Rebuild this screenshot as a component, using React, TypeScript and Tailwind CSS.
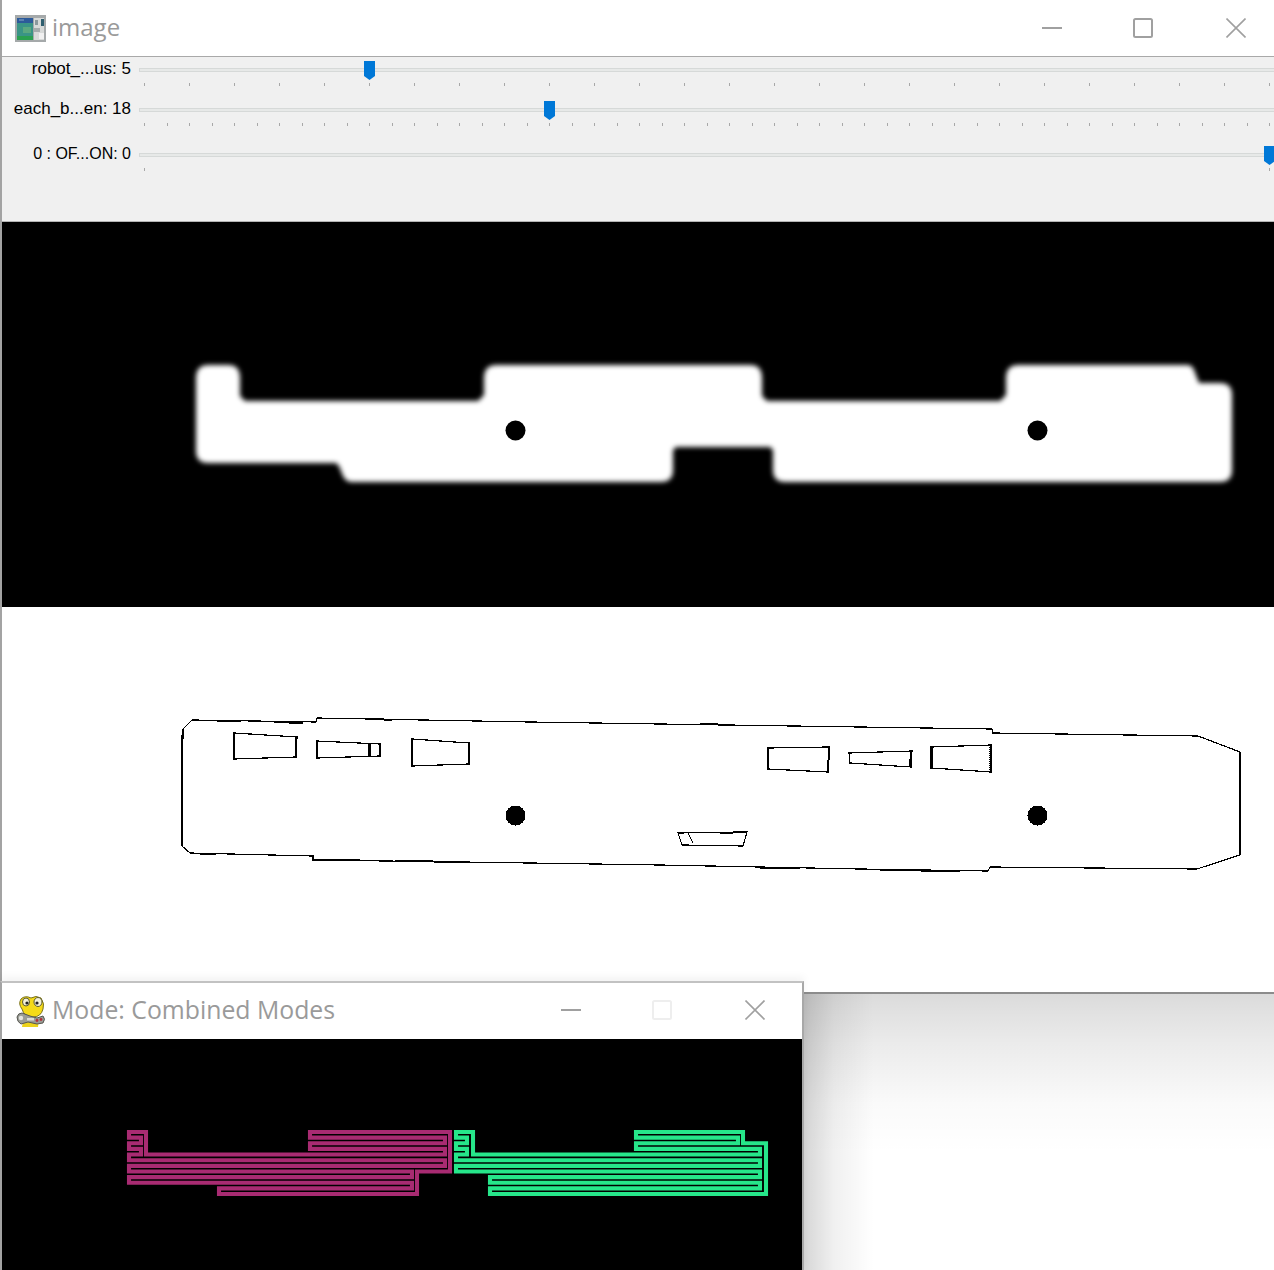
import React from "react";

const maskPath =
  "M196 378 Q196 365 209 365 L228 365 Q240 365 240 378 L240 396 L245 401 L478 401 L484 395 L484 378 Q484 365 497 365 L750 365 Q762 365 762 378 L762 396 L767 401 L1000 401 L1006 395 L1006 378 Q1006 365 1019 365 L1187 365 Q1192 365 1194 370 L1199 383 L1220 383 Q1232 383 1232 395 L1232 470 Q1232 482 1220 482 L785 482 Q773 482 773 470 L773 450 L770 447 L676 447 L673 450 L673 470 Q673 482 661 482 L352 482 Q346 482 343 476 L339 466 L336 463 L208 463 Q196 463 196 451 Z";

const hullPath =
  "M183 729 L192 720 L316 722 L317 718 L530 722 L660 724 L860 727 L992 729 L993 733 L1198 736 L1240 752 L1240 855 L1197 869 L990 867 L988 871 L860 869 L660 865 L530 863 L313 860 L313 856 L190 853 L182 846 Z";

const holes = [
  "M234 733 L297 737 L296 757 L234 759 Z",
  "M317 741 L380 744 L380 756 L317 758 Z",
  "M370 744 L370 756",
  "M412 739 L469 743 L469 764 L412 766 Z",
  "M768 748 L829 747 L828 772 L768 769 Z",
  "M849 753 L912 751 L911 767 L850 763 Z",
  "M931 747 L991 745 L991 772 L931 768 Z",
  "M678 833 L747 832 L743 846 L682 845 Z",
  "M688 833 L693 843",
];

// heavier runs where the contour in the picture is thicker
const heavyRuns = [
  "M217 721 L241 721",
  "M274 722 L303 723",
  "M375 719 L392 720",
  "M182 735 L182 845",
  "M200 854 L216 854",
  "M313 860 L360 860",
  "M395 861 L470 862",
  "M234 734 L234 759",
  "M296 738 L296 757",
  "M369 744 L369 757",
  "M768 750 L768 769",
  "M829 748 L828 772",
  "M911 752 L910 767",
  "M932 748 L932 768",
  "M700 724 L735 725",
  "M760 868 L800 868",
  "M880 870 L960 871",
  "M720 833 L747 832",
];

// lawn-mower rows share one pitch, so paths are [x, row index] pairs
const rowY = (row: number) => 1132 + row * 5.64;
const toPath = (pts: number[][]) =>
  "M" + pts.map(([x, r]) => `${x} ${rowY(r).toFixed(2)}`).join(" L") + " Z";

const magentaPath = toPath([
  [129, 0], [146, 0], [146, 4], [445, 4], [445, 3], [310, 3], [310, 2], [445, 2], [445, 1], [310, 1], [310, 0],
  [450, 0], [450, 7], [417, 7], [417, 11], [219, 11], [219, 10], [412, 10], [412, 9], [129, 9], [129, 8],
  [412, 8], [412, 7], [129, 7], [129, 6], [445, 6], [445, 5], [129, 5], [129, 4], [141, 4], [141, 3], [129, 3],
  [129, 2], [141, 2], [141, 1], [129, 1],
]);

const greenPath = toPath([
  [456, 0], [473, 0], [473, 4], [760, 4], [760, 3], [636, 3], [636, 2], [738, 2], [738, 1], [636, 1], [636, 0],
  [743, 0], [743, 2], [766, 2], [766, 11], [490, 11], [490, 10], [760, 10], [760, 9], [490, 9], [490, 8],
  [760, 8], [760, 7], [456, 7], [456, 6], [760, 6], [760, 5], [456, 5], [456, 4], [467, 4], [467, 3], [456, 3],
  [456, 2], [467, 2], [467, 1], [456, 1],
]);

function Bolt({ cx, cy }: { cx: number; cy: number }) {
  return <circle cx={cx} cy={cy} r="10" fill="#000" />;
}

function ImageIcon() {
  return (
    <svg width="31" height="27" viewBox="0 0 31 27" shapeRendering="crispEdges" className="blur-[0.4px]">
      <rect width="31" height="27" fill="#a5a9aa" />
      <rect x="2" y="3" width="16" height="22" fill="#3a9486" />
      <rect x="2" y="3" width="16" height="5" fill="#2c5a9a" />
      <rect x="4" y="4" width="5" height="2" fill="#5a80b0" />
      <rect x="2" y="21" width="16" height="4" fill="#2aa050" />
      <rect x="8" y="12" width="8" height="6" fill="#5aa880" />
      <rect x="19" y="3" width="10" height="22" fill="#d8dad9" />
      <rect x="20" y="5" width="3" height="5" fill="#8a989c" />
      <rect x="26" y="4" width="3" height="7" fill="#2f5f70" />
      <rect x="19" y="13" width="6" height="4" fill="#a5abac" />
      <rect x="24" y="18" width="5" height="6" fill="#f1f1f1" />
    </svg>
  );
}

function SnakeIcon() {
  return (
    <svg width="30" height="33" viewBox="0 0 30 33" className="blur-[0.3px]">
      <path d="M7 26 L6 32 L22 32 L23 24 Z" fill="#ecd21a" />
      <path d="M5 4 Q9 0 15 3 Q20 0 25 3 Q29 9 27 14 Q25 22 17 22 Q8 22 6 14 Q2 9 5 4 Z" fill="#f5da18" stroke="#77701f" strokeWidth="1" />
      <ellipse cx="10" cy="7" rx="3.5" ry="4" fill="#f4f1d8" stroke="#5a5a30" strokeWidth="1" />
      <ellipse cx="22" cy="7" rx="4" ry="4.5" fill="#f4f1d8" stroke="#5a5a30" strokeWidth="1" />
      <circle cx="11" cy="8" r="1.6" fill="#222" />
      <circle cx="21" cy="8" r="1.6" fill="#222" />
      <path d="M1 22 Q2 18 6 18 L14 21 L21 23 L27 21 Q30 24 27 28 L21 29 L12 27 L5 29 Q1 27 1 22 Z" fill="#9a9c96" stroke="#55564f" strokeWidth="1" />
      <circle cx="5" cy="23" r="2.2" fill="#e4e4df" />
      <rect x="11" y="23" width="7" height="2.5" fill="#dcdcd5" />
      <circle cx="21" cy="25.5" r="1.4" fill="#b03038" />
      <circle cx="25" cy="24.5" r="1.4" fill="#b03038" />
    </svg>
  );
}

function Caption({ min, max, close }: { min: string; max: string; close: string }) {
  return (
    <>
      <svg width="20" height="2" viewBox="0 0 20 2" className={min}>
        <rect width="20" height="2" fill="#a0a0a0" />
      </svg>
      <svg width="20" height="20" viewBox="0 0 20 20" className={max}>
        <rect x="1" y="1" width="18" height="18" rx="1.5" fill="none" stroke="currentColor" strokeWidth="2" />
      </svg>
      <svg width="20" height="20" viewBox="0 0 20 20" className={close}>
        <path d="M0.5 0.5 L19.5 19.5 M19.5 0.5 L0.5 19.5" stroke="#a0a0a0" strokeWidth="1.6" />
      </svg>
    </>
  );
}

function Slider({
  label,
  labelSize,
  value,
  max,
  ticks,
  rowClass,
}: {
  label: string;
  labelSize: string;
  value: number;
  max: number;
  ticks: number;
  rowClass: string;
}) {
  return (
    <div className={rowClass}>
      <div className="flex items-start">
        <span className={`w-[129px] shrink-0 text-right leading-[24px] text-black whitespace-pre ${labelSize}`}>{label}</span>
        <div className="flex-1 ml-2 relative mt-[11px]">
          <div className="h-1 bg-[#e7e9e8] border border-[#d6d9d8] border-r-0" />
          <svg
            width="11"
            height="19"
            viewBox="0 0 11 19"
            className="absolute top-[-7px]"
            style={{ left: (value / max) * 1125 }}
          >
            <path d="M0 0 H11 V15 L5.5 19 L0 15 Z" fill="#0078d7" />
          </svg>
          <div className="flex justify-between ml-[5px] mr-[4px] mt-[11px]">
            {Array.from({ length: ticks }, (_, i) => (
              <div key={i} className="w-px h-[3px] bg-[#a8a8a8]" />
            ))}
          </div>
        </div>
      </div>
    </div>
  );
}

export default function App() {
  return (
    <div className="relative w-[1274px] h-[1270px] overflow-hidden bg-white font-['Liberation_Sans',Arial,sans-serif]">
      <div className="flex flex-col border-l-2 border-[#a3a3a3]">
        <header className="h-[56px] flex items-center bg-white relative">
          <div className="ml-[13px] mr-[6px]">
            <ImageIcon />
          </div>
          <span className="font-['Open_Sans',sans-serif] text-[24px] text-[#9a9a9a] leading-none pb-[2px]">image</span>
          <div className="ml-auto flex items-center">
            <Caption min="mr-[71px]" max="mr-[73px] text-[#a0a0a0]" close="mr-[28px]" />
          </div>
        </header>
        <div className="h-px bg-[#a9a9a9]" />
        <div className="h-[165px] bg-[#f0f0f0] border-b border-[#b4b4b4] flex flex-col">
          <Slider label="robot_...us: 5" labelSize="text-[17px]" value={5} max={25} ticks={26} rowClass="h-10" />
          <Slider label="each_b...en: 18" labelSize="text-[17px]" value={18} max={50} ticks={51} rowClass="h-[45px]" />
          <Slider label="0 : OF...ON: 0" labelSize="text-[16px]" value={1} max={1} ticks={2} rowClass="flex-1" />
        </div>
        <svg width="1272" height="385" viewBox="2 222 1272 385" className="block bg-black">
          <defs>
            <filter id="soft" x="-5%" y="-10%" width="110%" height="120%">
              <feGaussianBlur stdDeviation="2.6" />
            </filter>
          </defs>
          <path d={maskPath} fill="#fff" filter="url(#soft)" />
          <Bolt cx={515.5} cy={430.5} />
          <Bolt cx={1037.5} cy={430.5} />
        </svg>
        <svg width="1272" height="385" viewBox="2 607 1272 385" className="block bg-white" shapeRendering="crispEdges">
          <path d={hullPath} fill="none" stroke="#000" strokeWidth="1.2" />
          {holes.map((d) => (
            <path key={d} d={d} fill="none" stroke="#000" strokeWidth="1.2" />
          ))}
          {heavyRuns.map((d) => (
            <path key={d} d={d} fill="none" stroke="#000" strokeWidth="2" />
          ))}
          <path d="M989.5 747 L989.5 771" stroke="#000" strokeWidth="2" strokeDasharray="1 1" />
          <Bolt cx={515.5} cy={815.5} />
          <Bolt cx={1037.5} cy={815.5} />
        </svg>
        <div className="h-[2px] bg-[#8c8c8c]" />
      </div>

      {/* shadow the second window drops on the desktop */}
      <div className="absolute left-[804px] top-[994px] w-[470px] h-[276px] bg-[linear-gradient(180deg,rgba(0,0,0,0.14)_0px,rgba(0,0,0,0.08)_50px,rgba(0,0,0,0.02)_110px,rgba(0,0,0,0)_160px)]" />
      <div className="absolute left-[804px] top-[994px] w-[80px] h-[276px] bg-[linear-gradient(90deg,rgba(0,0,0,0.16)_0px,rgba(0,0,0,0.06)_30px,rgba(0,0,0,0)_70px)]" />

      <div className="absolute left-0 top-[981px] w-[804px] h-[289px] flex flex-col border-t-2 border-r-2 border-l-2 border-t-[#c2c2c2] border-r-[#a8a8a8] border-l-[#a3a3a3] shadow-[0_-4px_8px_rgba(0,0,0,0.05)]">
        <header className="h-[56px] flex items-center bg-white">
          <div className="ml-[14px] mr-[6px]">
            <SnakeIcon />
          </div>
          <span className="font-['Open_Sans',sans-serif] text-[24.8px] text-[#9a9a9a] leading-none pb-[3px]">Mode: Combined Modes</span>
          <div className="ml-auto flex items-center mb-[2px]">
            <Caption min="mr-[71px]" max="mr-[73px] text-[#eeeeee]" close="mr-[37px]" />
          </div>
        </header>
        <svg width="800" height="231" viewBox="2 1039 800 231" className="block bg-black">
          <path d={magentaPath} fill="none" stroke="#a82b72" strokeWidth="4.1" strokeLinejoin="miter" />
          <path d={greenPath} fill="none" stroke="#26e68a" strokeWidth="4.1" strokeLinejoin="miter" />
        </svg>
      </div>
    </div>
  );
}
